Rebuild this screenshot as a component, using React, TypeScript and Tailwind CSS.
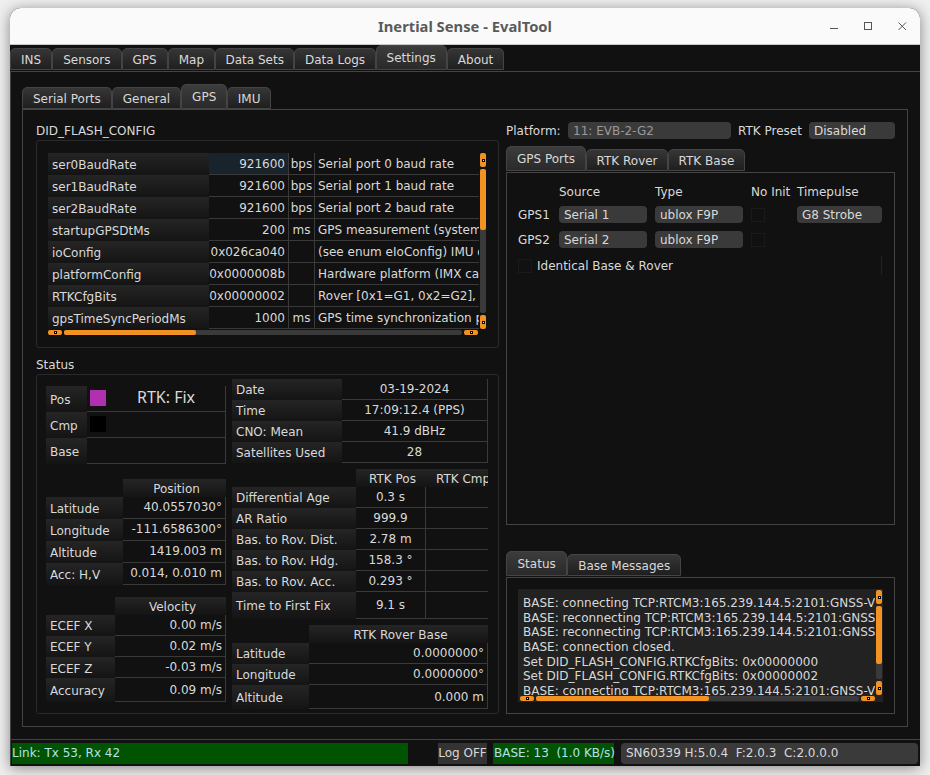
import { ReactNode } from 'react'

const Tab = ({ label, active, className = '' }: { label: string; active?: boolean; className?: string }) => (
  <div
    className={`flex items-center border border-[#444] rounded-t-[5px] ${
      active
        ? 'h-[25px] bg-gradient-to-b from-[#3c3c3c] to-[#2a2a2a] pt-[1px]'
        : 'h-[22px] mt-[3px] pt-[1px] bg-gradient-to-b from-[#363636] to-[#1f1f1f]'
    } ${className}`}
  >
    {label}
  </div>
)

const Knob = ({ className }: { className: string }) => (
  <div className={`flex items-center justify-center rounded-[2px] bg-[#f29222] ${className}`}>
    <div className="w-[3px] h-[3px] bg-[#f8e8c8] border border-black" />
  </div>
)

const VScroll = ({ thumb }: { thumb: string }) => (
  <div className="w-[6px] flex flex-col gap-[2px] shrink-0">
    <Knob className="h-[14px]" />
    <div className="flex-1 bg-[#3a3a3a] rounded-[2px]">
      <div className={`w-full bg-[#f29222] rounded-[2px] ${thumb}`} />
    </div>
    <Knob className="h-[14px]" />
  </div>
)

const HScroll = ({ thumb, className = '' }: { thumb: string; className?: string }) => (
  <div className={`h-[5px] flex gap-[2px] ${className}`}>
    <Knob className="w-[14px]" />
    <div className="flex-1 bg-[#3a3a3a] rounded-[2px]">
      <div className={`h-full bg-[#f29222] rounded-[2px] ${thumb}`} />
    </div>
    <Knob className="w-[14px]" />
  </div>
)

const Head = ({ children, className = '' }: { children?: ReactNode; className?: string }) => (
  <div className={`shrink-0 flex items-center pl-[4px] bg-gradient-to-b from-[#252525] to-[#141414] ${className}`}>
    {children}
  </div>
)

const Cell = ({ children, className = '' }: { children?: ReactNode; className?: string }) => (
  <div className={`flex items-center border-b border-r border-[#3a3a3a] whitespace-nowrap overflow-hidden ${className}`}>
    {children}
  </div>
)

const didRows = [
  ['ser0BaudRate', '921600', 'bps', 'Serial port 0 baud rate'],
  ['ser1BaudRate', '921600', 'bps', 'Serial port 1 baud rate'],
  ['ser2BaudRate', '921600', 'bps', 'Serial port 2 baud rate'],
  ['startupGPSDtMs', '200', 'ms', 'GPS measurement (system time)'],
  ['ioConfig', '0x026ca040', '', '(see enum eIoConfig) IMU disable'],
  ['platformConfig', '0x0000008b', '', 'Hardware platform (IMX carrier)'],
  ['RTKCfgBits', '0x00000002', '', 'Rover [0x1=G1, 0x2=G2], Base'],
  ['gpsTimeSyncPeriodMs', '1000', 'ms', 'GPS time synchronization pulse'],
]

const posRows = [
  ['Latitude', '40.0557030°'],
  ['Longitude', '-111.6586300°'],
  ['Altitude', '1419.003 m'],
  ['Acc: H,V', '0.014, 0.010 m'],
]
const velRows = [
  ['ECEF X', '0.00 m/s', 'h-[21px]'],
  ['ECEF Y', '0.02 m/s', 'h-[21px]'],
  ['ECEF Z', '-0.03 m/s', 'h-[21px]'],
  ['Accuracy', '0.09 m/s', 'h-[24px]'],
]
const infoRows = [
  ['Date', '03-19-2024'],
  ['Time', '17:09:12.4 (PPS)'],
  ['CNO: Mean', '41.9 dBHz'],
  ['Satellites Used', '28'],
]
const rtkRows = [
  ['Differential Age', '0.3 s', 'h-[21px]'],
  ['AR Ratio', '999.9', 'h-[21px]'],
  ['Bas. to Rov. Dist.', '2.78 m', 'h-[21px]'],
  ['Bas. to Rov. Hdg.', '158.3 °', 'h-[21px]'],
  ['Bas. to Rov. Acc.', '0.293 °', 'h-[21px]'],
  ['Time to First Fix', '9.1 s', 'h-[27px]'],
]
const baseRows = [
  ['Latitude', '0.0000000°', 'h-[21px]'],
  ['Longitude', '0.0000000°', 'h-[21px]'],
  ['Altitude', '0.000 m', 'h-[24px]'],
]
const logLines = [
  'BASE: connecting TCP:RTCM3:165.239.144.5:2101:GNSS-V',
  'BASE: reconnecting TCP:RTCM3:165.239.144.5:2101:GNSS-V',
  'BASE: reconnecting TCP:RTCM3:165.239.144.5:2101:GNSS-V',
  'BASE: connection closed.',
  'Set DID_FLASH_CONFIG.RTKCfgBits: 0x00000000',
  'Set DID_FLASH_CONFIG.RTKCfgBits: 0x00000002',
  'BASE: connecting TCP:RTCM3:165.239.144.5:2101:GNSS-V',
]

const Combo = ({ children, className = '' }: { children: ReactNode; className?: string }) => (
  <div className={`h-[17px] flex items-center pl-[5px] rounded-[4px] bg-[#3a3a3a] whitespace-nowrap ${className}`}>
    {children}
  </div>
)

const Check = ({ className = '' }: { className?: string }) => (
  <div className={`w-[14px] h-[14px] border border-[#1a1a1a] bg-[#111] ${className}`} />
)

export default function App() {
  return (
    <div
      className="w-[930px] h-[775px] overflow-hidden bg-[#efefef] pl-[10px] pt-[8px] text-[12px] text-[#d9d9d9]"
      style={{ fontFamily: '"DejaVu Sans", sans-serif' }}
    >
      <div className="w-[910px] h-[758px] flex flex-col rounded-t-[11px] overflow-hidden bg-[#111] shadow-[0_2px_14px_rgba(0,0,0,0.45)]">
        {/* Title bar */}
        <div className="h-[37px] shrink-0 flex items-center bg-[#fafafa] border-b border-[#c8c8c8] relative">
          <div
            className="flex-1 text-center text-[14.75px] font-bold text-[#5a5a5a]"
            style={{ fontFamily: '"Noto Sans", sans-serif' }}
          >
            Inertial Sense - EvalTool
          </div>
          <div className="absolute right-[10px] top-[10px] flex gap-[18px] text-[#555]">
            <svg width="16" height="16" viewBox="0 0 16 16" fill="none" stroke="currentColor">
              <path d="M4 10.5h8" />
            </svg>
            <svg width="16" height="16" viewBox="0 0 16 16" fill="none" stroke="currentColor">
              <rect x="4.5" y="4.5" width="7" height="7" />
            </svg>
            <svg width="16" height="16" viewBox="0 0 16 16" fill="none" stroke="currentColor">
              <path d="M4.5 4.5l7.5 7.5M12 4.5l-7.5 7.5" />
            </svg>
          </div>
        </div>

        {/* Main tabs */}
        <div className="flex h-[25px] shrink-0">
          <Tab label="INS" className="px-[10px]" />
          <Tab label="Sensors" className="px-[10px]" />
          <Tab label="GPS" className="px-[10px]" />
          <Tab label="Map" className="px-[10px]" />
          <Tab label="Data Sets" className="px-[9.5px]" />
          <Tab label="Data Logs" className="px-[9.5px]" />
          <Tab label="Settings" active className="px-[10px]" />
          <Tab label="About" className="px-[10px]" />
        </div>

        <div className="h-[668px] shrink-0 mt-[1px] border-t border-l border-[#444] pl-[11px] pt-[12px]">
          {/* Settings tabs */}
          <div className="flex h-[25px]">
            <Tab label="Serial Ports" className="px-[10px]" />
            <Tab label="General" className="px-[10px]" />
            <Tab label="GPS" active className="px-[10px]" />
            <Tab label="IMU" className="px-[9.5px]" />
          </div>

          <div className="w-[886px] h-[618px] border border-[#444] flex gap-[7px] pl-[13px]">
            {/* Left column */}
            <div className="w-[463px] shrink-0">
              <div className="h-[30px] pt-[12px] leading-[18px]">DID_FLASH_CONFIG</div>
              <div className="h-[208px] border border-[#2a2a2a] rounded-[3px] pl-[11px] pt-[12px]">
                <div className="w-[438px]">
                  <div className="flex gap-[1px]">
                    <div className="w-[431px] overflow-hidden">
                      {didRows.map(([name, value, unit, desc], i) => (
                        <div key={name} className="flex h-[22px]">
                          <Head className="w-[161px] pt-[1px]">{name}</Head>
                          <Cell className={`w-[80px] shrink-0 justify-end pr-[3px] ${i === 0 ? 'bg-[#18232b]' : ''}`}>
                            {value}
                          </Cell>
                          <Cell className="w-[26px] shrink-0 justify-center">{unit}</Cell>
                          <Cell className="w-[164px] shrink-0 pl-[3px] border-r-0">{desc}</Cell>
                        </div>
                      ))}
                    </div>
                    <VScroll thumb="h-[61px]" />
                  </div>
                  <HScroll thumb="w-[132px]" className="w-[430px] mt-[1px]" />
                </div>
              </div>

              <div className="h-[26px] pt-[9px] leading-[16px]">Status</div>
              <div className="h-[340px] border border-[#2a2a2a] rounded-[3px] flex gap-[6px] pl-[9px]">
                {/* Status left */}
                <div className="w-[180px] shrink-0 pt-[11px]">
                  <div className="flex h-[26px]">
                    <Head className="w-[41px] pt-[2px]">Pos</Head>
                    <Cell className="flex-1">
                      <div className="w-[16px] h-[16px] bg-[#b030b0] ml-[3px] mb-[2px]" />
                      <div
                        className="flex-1 text-center text-[16px] pl-[1px] pb-[3px]"
                        style={{ fontFamily: '"Noto Sans", sans-serif' }}
                      >
                        RTK: Fix
                      </div>
                    </Cell>
                  </div>
                  <div className="flex h-[26px]">
                    <Head className="w-[41px] pt-[2px]">Cmp</Head>
                    <Cell className="flex-1">
                      <div className="w-[16px] h-[16px] bg-black ml-[3px] mb-[2px]" />
                    </Cell>
                  </div>
                  <div className="flex h-[26px]">
                    <Head className="w-[41px] pt-[2px]">Base</Head>
                    <Cell className="flex-1" />
                  </div>

                  <div className="flex h-[18px] mt-[15px]">
                    <div className="w-[77px]" />
                    <Head className="flex-1 justify-center pt-[2px]">Position</Head>
                  </div>
                  {posRows.map(([name, value]) => (
                    <div key={name} className="flex h-[22px]">
                      <Head className="w-[77px] pt-[2px]">{name}</Head>
                      <Cell className="flex-1 justify-end pr-[3px] pb-[1px]">{value}</Cell>
                    </div>
                  ))}

                  <div className="flex h-[18px] mt-[12px]">
                    <div className="w-[69px]" />
                    <Head className="flex-1 justify-center pt-[2px]">Velocity</Head>
                  </div>
                  {velRows.map(([name, value, h], i) => (
                    <div key={name} className={`flex ${h}`}>
                      <Head className={`w-[69px] ${i > 1 ? 'pt-[2px]' : ''}`}>{name}</Head>
                      <Cell className="flex-1 justify-end pr-[3px]">{value}</Cell>
                    </div>
                  ))}
                </div>

                {/* Status right */}
                <div className="w-[256px] shrink-0 pt-[4px]">
                  {infoRows.map(([name, value]) => (
                    <div key={name} className="flex h-[21px]">
                      <Head className="w-[110px]">{name}</Head>
                      <Cell className="flex-1 justify-center">{value}</Cell>
                    </div>
                  ))}

                  <div className="flex h-[18px] mt-[6px]">
                    <div className="w-[124px]" />
                    <Head className="w-[69px] justify-center pl-0 pt-[2px]">RTK Pos</Head>
                    <Head className="w-[63px] pl-[11px] pt-[2px] whitespace-nowrap overflow-hidden">RTK Cmp</Head>
                  </div>
                  {rtkRows.map(([name, value, h]) => (
                    <div key={name} className={`flex ${h}`}>
                      <Head className="w-[124px]">{name}</Head>
                      <Cell className="w-[70px] justify-center">{value}</Cell>
                      <Cell className="flex-1 border-r-0" />
                    </div>
                  ))}

                  <div className="flex h-[18px] mt-[6px]">
                    <div className="w-[77px]" />
                    <Head className="flex-1 justify-center pt-[2px]">RTK Rover Base</Head>
                  </div>
                  {baseRows.map(([name, value, h], i) => (
                    <div key={name} className={`flex ${h}`}>
                      <Head className={`w-[77px] ${i === 2 ? 'pt-[2px]' : ''}`}>{name}</Head>
                      <Cell className="flex-1 justify-end pr-[3px]">{value}</Cell>
                    </div>
                  ))}
                </div>
              </div>
            </div>

            {/* Right column */}
            <div className="w-[389px] shrink-0 pt-[11px]">
              <div className="flex items-center h-[19px] mb-[6px]">
                <span className="w-[62px]">Platform:</span>
                <Combo className="w-[163px] text-[#999]">11: EVB-2-G2</Combo>
                <span className="ml-[7px] w-[71px]">RTK Preset</span>
                <Combo className="w-[86px]">Disabled</Combo>
              </div>
              <div className="flex h-[25px]">
                <Tab label="GPS Ports" active className="px-[10px]" />
                <Tab label="RTK Rover" className="px-[9.5px]" />
                <Tab label="RTK Base" className="px-[9.5px]" />
              </div>
              <div className="h-[353px] mt-[1px] border border-[#444] pl-[11px] pt-[10px]">
                <div className="grid grid-cols-[41px_96px_96px_46px_85px] items-center">
                  <div className="h-[19px]" />
                  <div className="h-[19px] leading-[19px]">Source</div>
                  <div className="h-[19px] leading-[19px]">Type</div>
                  <div className="h-[19px] leading-[19px]">No Init</div>
                  <div className="h-[19px] leading-[19px]">Timepulse</div>
                </div>
                <div className="grid grid-cols-[41px_96px_96px_46px_85px] items-center mt-[3px] h-[19px]">
                  <span>GPS1</span>
                  <Combo className="w-[88px]">Serial 1</Combo>
                  <Combo className="w-[88px]">ublox F9P</Combo>
                  <Check />
                  <Combo className="w-[85px]">G8 Strobe</Combo>
                </div>
                <div className="grid grid-cols-[41px_96px_96px_46px_85px] items-center mt-[6px] h-[19px]">
                  <span>GPS2</span>
                  <Combo className="w-[88px]">Serial 2</Combo>
                  <Combo className="w-[88px]">ublox F9P</Combo>
                  <Check />
                </div>
                <div className="flex items-center gap-[5px] mt-[7px] h-[19px] pr-[12px]">
                  <Check />
                  <span>Identical Base &amp; Rover</span>
                  <div className="ml-auto w-[1px] h-[19px] bg-[#222]" />
                </div>
              </div>

              <div className="flex h-[25px] mt-[26px]">
                <Tab label="Status" active className="px-[10.5px]" />
                <Tab label="Base Messages" className="px-[10px]" />
              </div>
              <div className="h-[137px] mt-[1px] border border-[#444] pl-[11px] pt-[11px]">
                <div className="w-[365px] h-[113px] bg-[#222] p-[1px] flex flex-col">
                  <div className="flex h-[105px] gap-[1px] pl-[4px]">
                    <div className="flex-1 overflow-hidden whitespace-nowrap pt-[6px] leading-[14.67px]">
                      {logLines.map((line, i) => (
                        <div key={i}>{line}</div>
                      ))}
                    </div>
                    <VScroll thumb="h-[58px]" />
                  </div>
                  <HScroll thumb="w-[173px]" className="mt-[1px] ml-[1px] w-[355px]" />
                </div>
              </div>
            </div>
          </div>
        </div>

        {/* Status bar */}
        <div className="flex-1 flex items-center border-t border-[#444] border-l pl-[1px] gap-[6px]">
          <div className="w-[396px] h-[21px] flex items-center bg-[#005300] text-[#b8e0e8]">Link: Tx 53, Rx 42</div>
          <div className="w-[49px] h-[21px] ml-[24px] flex items-center justify-center bg-[#333] whitespace-nowrap">Log OFF</div>
          <div className="w-[121px] h-[21px] flex items-center pl-[1px] bg-[#005300] text-[#b8e0e8] whitespace-pre">
            BASE: 13  (1.0 KB/s)
          </div>
          <div className="w-[297px] ml-[1px] h-[21px] flex items-center pl-[5px] rounded-[4px] bg-[#3a3a3a] whitespace-pre">
            SN60339 H:5.0.4  F:2.0.3  C:2.0.0.0
          </div>
        </div>
      </div>
    </div>
  )
}
